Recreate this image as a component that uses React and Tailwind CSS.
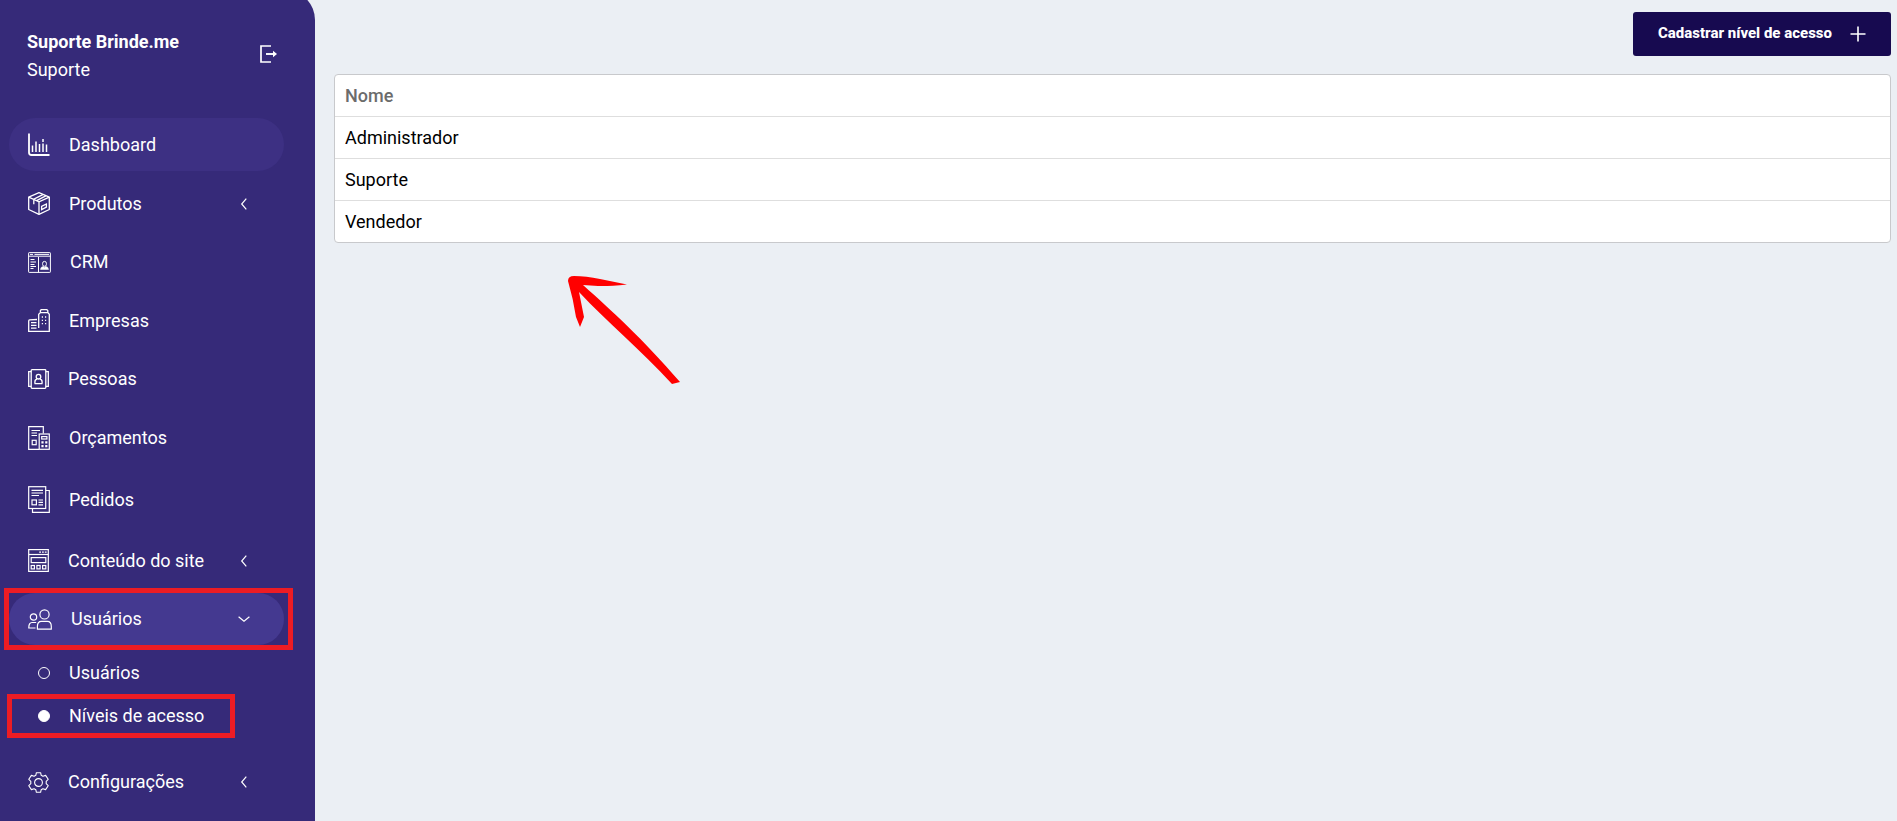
import React from "react";

function Icon({ w, h, children, sw = 1.2 }) {
  return (
    <svg
      width={w}
      height={h}
      viewBox={`0 0 ${w} ${h}`}
      fill="none"
      stroke="currentColor"
      strokeWidth={sw}
      className="shrink-0"
      aria-hidden="true"
    >
      {children}
    </svg>
  );
}

const DashboardIcon = () => (
  <Icon w={22} h={23} sw={1.5}>
    <path d="M1 0.5V19.5Q1 22 3.5 22H21.5" strokeWidth="1.8" />
    <path d="M4.5 12.5V19M8 8.5V19M11.5 11V19M15 10.5V19M15 6V9M18.5 11.5V19" />
  </Icon>
);

const BoxIcon = () => (
  <Icon w={22} h={23} sw={1.3}>
    <path d="M11 0.7L21.3 5.2V17.5L11 22.3L0.7 17.5V5.2Z" strokeLinejoin="round" />
    <path d="M0.7 5.2L11 9.8L21.3 5.2M11 9.8V22.3M14.8 2.6L5.8 7.2V12.2M17.8 3.8L8.6 8.6" />
    <path d="M13.6 14.4L18.4 12V15.2L13.6 17.6Z" />
  </Icon>
);

const CrmIcon = () => (
  <Icon w={23} h={21} sw={1}>
    <rect x="0.6" y="0.6" width="21.8" height="19.8" rx="0.6" />
    <path d="M0.6 4.2H22.4M2 2.4H5M6.5 2.4H21M10.5 5V20.4" />
    <path d="M2.5 7.5H6.5M2.5 10H8M2.5 12.5H6.5M2.5 14.5H8M2.5 16.5H5.5" strokeWidth="1.2" />
    <path d="M14.6 12.5V11.3a1.9 1.9 0 0 1 3.8 0V12.5Q18.4 14.3 16.5 14.3T14.6 12.5Z" />
    <path d="M12.5 17.5Q12.5 14.8 15.4 14.4L16.5 15.5L17.6 14.4Q20.5 14.8 20.5 17.5Z" fill="currentColor" strokeWidth="0.5" />
  </Icon>
);

const BuildingsIcon = () => (
  <Icon w={22} h={23} sw={1.3}>
    <path d="M9 10.5L1.6 10.9Q0.7 11 0.7 12V22.3H21.3V5.2L19.8 3.6H12.4L10.7 5.2V19" />
    <path d="M12.4 3.6V1.6L13.2 0.7H18.8L19.8 1.6V3.6M3 13.6H8.5M3 16.4H8.5M3 19.2H8.5" />
    <path
      d="M13.8 8H15M17 8H18.2M13.8 11.3H15M17 11.3H18.2M13.8 14.6H15M17 14.6H18.2"
      strokeWidth="1.3"
    />
  </Icon>
);

const PeopleCardIcon = () => (
  <Icon w={21} h={20} sw={1.3}>
    <rect x="3.2" y="0.7" width="14.6" height="18.6" rx="0.8" />
    <path d="M3.2 2.7H0.7V17.3H3.2M17.8 2.7H20.3V17.3H17.8" />
    <circle cx="10.5" cy="7.7" r="2.3" />
    <path d="M6.9 14.6V13Q6.9 10.6 9 10.2M14.1 14.6V13Q14.1 10.6 12 10.2M6.5 14.6H14.5" />
  </Icon>
);

const BudgetIcon = () => (
  <Icon w={22} h={24}>
    <path d="M11 23.3H0.7V0.7H15.3V7.5M3.5 4.5H12M3.5 7H9M3.5 9.5H9" />
    <rect x="4.2" y="14.3" width="4" height="4.4" />
    <rect x="11.2" y="8" width="10.1" height="15.3" />
    <rect x="13.7" y="10.6" width="5.2" height="2.4" />
    <path d="M13.4 16.4H15.6M17.2 16.4H19.4M13.4 20.2H15.6M17.2 20.2H19.4" strokeWidth="2.2" />
  </Icon>
);

const OrdersIcon = () => (
  <Icon w={22} h={27}>
    <rect x="0.7" y="0.7" width="17" height="21.8" />
    <path d="M17.7 4.5H21.3V26.3H4.5V22.5M3.5 4.4H15M3.5 7H15M3.5 9.5H11" />
    <rect x="4" y="14" width="4.4" height="4.8" />
    <path d="M10.5 14H15M10.5 16.4H15M10.5 18.8H15" />
  </Icon>
);

const SiteIcon = () => (
  <Icon w={21} h={23}>
    <rect x="0.7" y="0.6" width="19.6" height="21.8" />
    <path d="M0.7 5.5H20.3" />
    <path d="M11.2 3.2H13M14 3.2H15.8M16.8 3.2H18.6" strokeWidth="1.3" />
    <rect x="3.2" y="8.6" width="14.6" height="5" />
    <rect x="3.2" y="16.5" width="3.2" height="3.4" />
    <rect x="8.9" y="16.5" width="3.2" height="3.4" />
    <rect x="14.6" y="16.5" width="3.2" height="3.4" />
  </Icon>
);

const UsersIcon = () => (
  <Icon w={24} h={21}>
    <circle cx="16.5" cy="5.4" r="4.6" />
    <circle cx="5.5" cy="8" r="3.2" />
    <path d="M9.4 20.2V17.6Q9.4 12.4 13.4 12.4H19.4Q23.3 12.4 23.3 17.6V20.2Z" strokeLinejoin="round" />
    <path d="M8.2 13.5H4Q0.8 13.5 0.8 19H7.5" />
  </Icon>
);

const GearIcon = () => (
  <Icon w={21} h={21} sw={1.1}>
    <circle cx="10.5" cy="10.5" r="3.9" />
    <path
      strokeLinejoin="round"
      d="M8.4 0.7H12.6L13.2 3.3L14.9 4.2L17.6 3.4L20.2 7.3L18.2 9.3V11.7L20.2 13.7L17.6 17.6L14.9 16.8L13.2 17.7L12.6 20.3H8.4L7.8 17.7L6.1 16.8L3.4 17.6L0.8 13.7L2.8 11.7V9.3L0.8 7.3L3.4 3.4L6.1 4.2L7.8 3.3Z"
    />
  </Icon>
);

const ChevronLeft = () => (
  <Icon w={12} h={12}>
    <path d="M8.3 0.6L3.7 6L8.3 11.4" />
  </Icon>
);

const ChevronDown = () => (
  <Icon w={12} h={12}>
    <path d="M0.6 3.7L6 8.3L11.4 3.7" />
  </Icon>
);

const menu = [
  { label: "Dashboard", icon: DashboardIcon, tone: "bg-[#3d3083]" },
  { label: "Produtos", icon: BoxIcon, arrow: ChevronLeft },
  { label: "CRM", icon: CrmIcon },
  { label: "Empresas", icon: BuildingsIcon },
  { label: "Pessoas", icon: PeopleCardIcon },
  { label: "Orçamentos", icon: BudgetIcon },
  { label: "Pedidos", icon: OrdersIcon },
  { label: "Conteúdo do site", icon: SiteIcon, arrow: ChevronLeft },
  {
    label: "Usuários",
    icon: UsersIcon,
    arrow: ChevronDown,
    tone: "bg-[#443990]",
    marked: true,
    children: [
      { label: "Usuários" },
      { label: "Níveis de acesso", active: true, marked: true },
    ],
  },
  { label: "Configurações", icon: GearIcon, arrow: ChevronLeft },
];

function MenuItem({ item }) {
  const Glyph = item.icon;
  const Arrow = item.arrow;
  return (
    <li>
      <div className="relative">
        <a
          href="#"
          className={`flex items-center gap-[19px] rounded-full py-[15px] pl-[19px] pr-[34px] leading-[22px] ${item.tone ?? ""}`}
        >
          <Glyph />
          <span className="grow">{item.label}</span>
          {Arrow && <Arrow />}
        </a>
        {item.marked && (
          <div className="pointer-events-none absolute -top-[5px] -right-[9px] -bottom-[5px] -left-[5px] border-5 border-[#ed1c24]" />
        )}
      </div>
      {item.children && (
        <ul className="pt-1.5 pb-[13px]">
          {item.children.map((child) => (
            <li key={child.label} className="relative">
              <a href="#" className="flex h-[43px] items-center gap-[19px] pl-[29px]">
                <span
                  className={`size-3 rounded-full border border-white ${child.active ? "bg-white" : ""}`}
                />
                <span>{child.label}</span>
              </a>
              {child.marked && (
                <div className="pointer-events-none absolute top-0 right-[49px] -bottom-px -left-0.5 border-5 border-[#ed1c24]" />
              )}
            </li>
          ))}
        </ul>
      )}
    </li>
  );
}

function Sidebar() {
  return (
    <aside className="-mt-2.5 w-[315px] shrink-0 rounded-tr-[30px] bg-[#362a79] pt-[38px] pr-[31px] pb-3 pl-[9px] text-white">
      <header className="mb-[34px] flex items-start justify-between pr-[6px] pl-[18px] leading-7">
        <div>
          <p className="font-bold">Suporte Brinde.me</p>
          <p>Suporte</p>
        </div>
        <button type="button" aria-label="Sair" className="mt-[17px]">
          <Icon w={18} h={18} sw={1.7}>
            <path d="M11 1H1V17H11" />
            <path d="M6 9H15" strokeWidth="1.9" />
            <path d="M13 5.8L17 9L13 12.2Z" fill="currentColor" stroke="none" />
          </Icon>
        </button>
      </header>
      <nav>
        <ul className="flex flex-col gap-1.5">
          {menu.map((item) => (
            <MenuItem key={item.label} item={item} />
          ))}
        </ul>
      </nav>
    </aside>
  );
}

export default function App() {
  return (
    <div className="relative flex min-h-screen overflow-hidden bg-[#ebeff4] font-['Roboto',sans-serif] text-lg">
      <Sidebar />
      <main className="flex min-w-0 grow flex-col gap-[18px] pt-3 pr-1.5 pl-[19px]">
        <button
          type="button"
          className="flex h-11 items-center gap-[18px] self-end rounded-[3px] bg-[#170a50] px-[25px] text-[15px] font-extrabold text-white"
        >
          Cadastrar nível de acesso
          <Icon w={16} h={16} sw={1.6}>
            <path d="M8 0.5V15.5M0.5 8H15.5" />
          </Icon>
        </button>
        <div className="overflow-hidden rounded-[4px] border border-[#c8c9cc] bg-white">
          <table className="w-full border-collapse text-left text-black">
            <thead>
              <tr className="h-[41px]">
                <th className="px-2.5 pt-0.5 pb-0 font-medium text-[#6c6c6c]">Nome</th>
              </tr>
            </thead>
            <tbody>
              {["Administrador", "Suporte", "Vendedor"].map((name) => (
                <tr key={name} className="h-[42px] border-t border-[#dedede]">
                  <td className="px-2.5 pt-0.5 pb-0">{name}</td>
                </tr>
              ))}
            </tbody>
          </table>
        </div>
      </main>
      <svg
        width="116"
        height="112"
        viewBox="0 0 116 112"
        fill="#ff0000"
        className="pointer-events-none absolute top-[274px] left-[566px]"
        aria-hidden="true"
      >
        <path d="M2 7Q2 2 8 2Q20 2 34 5L61 10.500Q42 12.500 32 12L17 11C46 37 76 64 114 108L106 110C74 75 42 49 13 18L18 43L14 53L10 43Q7 24 2 7Z" />
      </svg>
    </div>
  );
}
